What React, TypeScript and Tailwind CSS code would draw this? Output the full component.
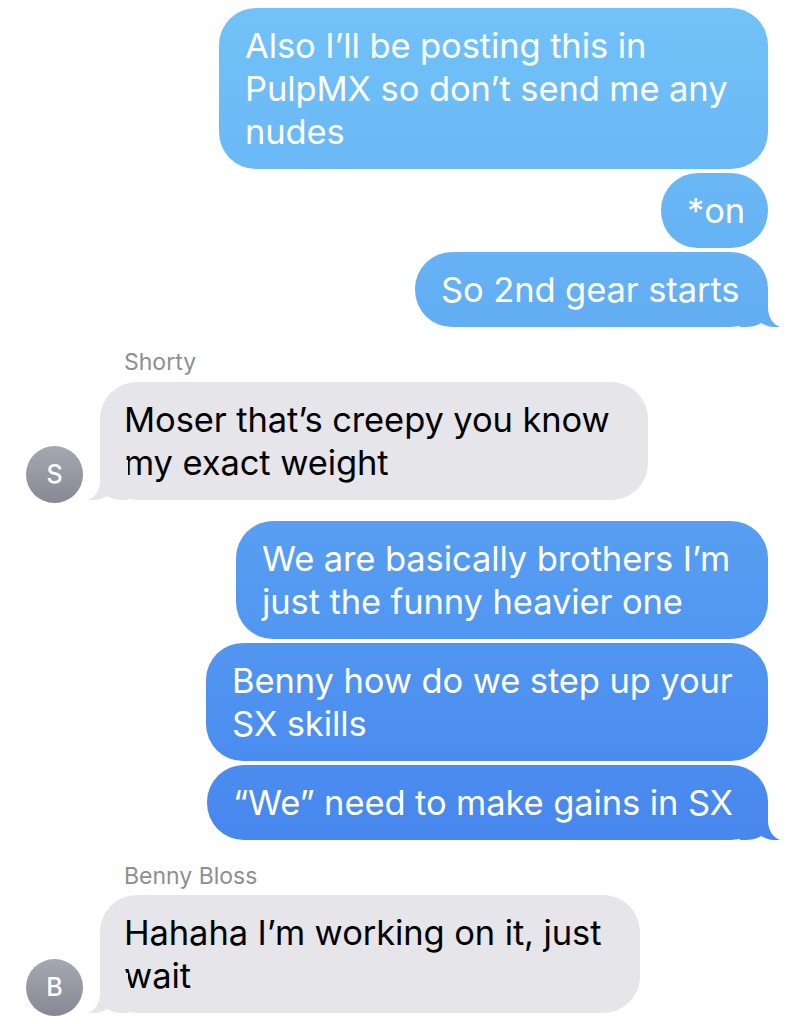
import React from "react";

const blueBg =
  "bg-fixed bg-[linear-gradient(180deg,#72c3f8_0px,#62adf3_330px,#5399f1_600px,#4786ee_850px,#4580ee_1024px)]";

function OutTail() {
  return (
    <div
      className={`absolute right-[-12px] bottom-0 w-[40px] h-[40px] ${blueBg} [clip-path:path('M0_0H28V20C28_31_33_37_40_40C33_41_26_39_21_36C17_38.5_12_40_5_40H0Z')]`}
    />
  );
}

function InTail() {
  return (
    <div className="absolute left-[-12px] bottom-0 w-[40px] h-[40px] bg-[#e5e5ea] [clip-path:path('M40_0H12V20C12_31_7_37_0_40C7_41_14_39_19_36C23_38.5_28_40_35_40H40Z')]" />
  );
}

function Out({
  w,
  lines,
  tail,
}: {
  w: string;
  lines: string[];
  tail?: boolean;
}) {
  return (
    <div
      className={`relative ${w} rounded-[37px] ${blueBg} text-white pl-[26px] py-[16px] text-[34.5px] leading-[43px] tracking-[-0.1px]`}
    >
      {lines.map((l, i) => (
        <div key={i} className="whitespace-nowrap">
          {l}
        </div>
      ))}
      {tail && <OutTail />}
    </div>
  );
}

function Avatar({ letter }: { letter: string }) {
  return (
    <div className="w-[57px] h-[57px] rounded-full bg-[linear-gradient(180deg,#a6a8b1,#868893)] flex items-center justify-center text-white text-[25px] font-medium translate-y-[3px] shrink-0">
      {letter}
    </div>
  );
}

function In({ w, lines, letter }: { w: string; lines: string[]; letter: string }) {
  return (
    <div className="flex items-end pl-[26px]">
      <Avatar letter={letter} />
      <div
        className={`relative ml-[17px] ${w} rounded-[37px] bg-[#e5e5ea] text-black pl-[24px] py-[16px] text-[34.5px] leading-[43px] tracking-[-0.1px]`}
      >
        {lines.map((l, i) => (
          <div key={i} className="whitespace-nowrap">
            {l}
          </div>
        ))}
        <InTail />
      </div>
    </div>
  );
}

export default function App() {
  return (
    <div className="w-[803px] h-[1024px] overflow-hidden bg-white pt-[8px] flex flex-col font-['Inter','Liberation_Sans',sans-serif]">
      <div className="flex flex-col items-end gap-[4px] pr-[35px]">
        <Out
          w="w-[549px]"
          lines={["Also I’ll be posting this in", "PulpMX so don’t send me any", "nudes"]}
        />
        <Out w="w-[107px]" lines={["*on"]} />
        <Out w="w-[353px]" lines={["So 2nd gear starts"]} tail />
      </div>
      <div className="mt-[22px] pl-[124px] text-[23px] leading-[26px] text-[#8e8e93]">
        Shorty
      </div>
      <div className="mt-[7px]">
        <In
          w="w-[548px]"
          letter="S"
          lines={["Moser that’s creepy you know", "my exact weight"]}
        />
      </div>
      <div className="mt-[21px] flex flex-col items-end gap-[4px] pr-[35px]">
        <Out
          w="w-[532px]"
          lines={["We are basically brothers I’m", "just the funny heavier one"]}
        />
        <Out w="w-[562px]" lines={["Benny how do we step up your", "SX skills"]} />
        <Out w="w-[561px]" lines={["“We” need to make gains in SX"]} tail />
      </div>
      <div className="mt-[23px] pl-[124px] text-[23px] leading-[26px] text-[#8e8e93]">
        Benny Bloss
      </div>
      <div className="mt-[6px]">
        <In
          w="w-[540px]"
          letter="B"
          lines={["Hahaha I’m working on it, just", "wait"]}
        />
      </div>
    </div>
  );
}
